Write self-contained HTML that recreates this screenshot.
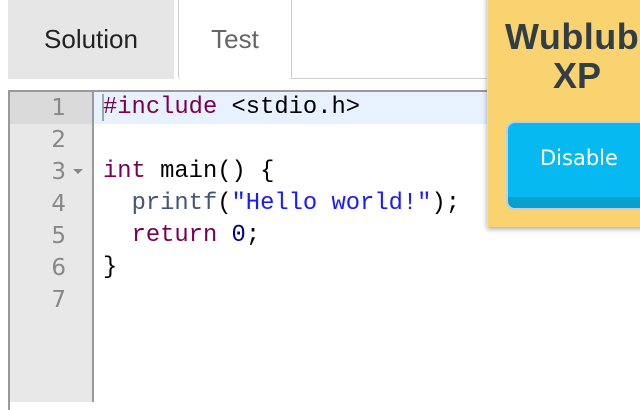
<!DOCTYPE html>
<html><head><style>
*{margin:0;padding:0;box-sizing:border-box}
body{width:640px;height:400px;overflow:hidden;background:#fff;position:relative;font-family:"Liberation Sans",sans-serif}
.tab1{position:absolute;left:8px;top:0;width:166px;height:79px;background:#e6e6e6;color:#222;font-size:26px;text-align:center;line-height:78px}
.tab2{position:absolute;left:178px;top:-2px;width:114px;height:81px;background:#fff;border:1px solid #ccc;border-bottom:none;border-radius:0 0 3px 3px;color:#666;font-size:26px;text-align:center;line-height:80px}
.line{position:absolute;left:291px;top:78px;width:200px;height:1px;background:#ccc}
.ed{position:absolute;left:8px;top:90px;width:640px;height:320px;border-top:2px solid #999;border-left:2px solid #999}
.gut{position:absolute;left:10px;top:92px;width:84px;height:310px;background:#e8e8e8;border-right:2px solid #999}
.hl{position:absolute;left:94px;top:92px;width:400px;height:32px;background:#e8f2fe}
.gh{position:absolute;left:10px;top:92px;width:82px;height:32px;background:#dadada}
.cur{position:absolute;left:102px;top:94px;width:2px;height:27px;background:#9aa}
.nums{position:absolute;left:10px;top:92px;width:56px;text-align:right;font-size:23px;line-height:32px;color:#888;font-family:"DejaVu Sans",sans-serif}
.code{position:absolute;left:103px;top:92px;font-family:"Liberation Mono",monospace;font-size:23.8px;line-height:32px;color:#000;white-space:pre}
.k{color:#770055}.f{color:#445577}.s{color:#1a1aff}.n{color:#000088}
.arr{position:absolute;left:73px;top:169px;width:0;height:0;border-left:5px solid transparent;border-right:5px solid transparent;border-top:5px solid #888}
.pop{position:absolute;left:487px;top:-5px;width:160px;height:232px;background:#f9d36f;box-shadow:0 2px 5px rgba(0,0,0,.35);border-left:1px solid #ddd}
.t1,.t2{position:absolute;font-family:"Liberation Sans",sans-serif;font-weight:bold;font-size:36px;line-height:40px;color:#333d45;white-space:nowrap}
.t1{left:17px;top:22px;letter-spacing:0.5px}
.t2{left:65px;top:61px}
.btn{position:absolute;left:18px;top:126px;width:160px;height:89px;background:#06baf1;border:2px solid #bcd0e0;border-radius:9px;overflow:hidden}
.btn .b{position:absolute;left:0;bottom:0;width:100%;height:11px;background:#0aa0cd}
.btn span{position:absolute;left:32px;top:23px;color:#fff;font-size:21px;font-family:"DejaVu Sans",sans-serif}
</style></head><body>
<div class="tab1">Solution</div>
<div class="tab2">Test</div>
<div class="line"></div>
<div class="ed"></div>
<div class="gut"></div>
<div class="gh"></div>
<div class="hl"></div>
<div class="cur"></div>
<div class="nums">1<br>2<br>3<br>4<br>5<br>6<br>7</div>
<div class="arr"></div>
<div class="code"><span class="k">#include</span> &lt;stdio.h&gt;

<span class="k">int</span> main() {
  <span class="f">printf</span>(<span class="s">"Hello world!"</span>);
  <span class="k">return</span> <span class="n">0</span>;
}
</div>
<div class="pop">
<div class="t1">Wublub</div>
<div class="t2">XP</div>
<div class="btn"><span>Disable</span><div class="b"></div></div>
</div>
</body></html>
